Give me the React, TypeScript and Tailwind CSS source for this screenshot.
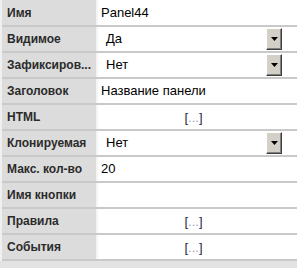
import React from 'react'

type Row = { label: string; value?: string; kind?: 'text' | 'select' | 'dots' }

const rows: Row[] = [
  { label: 'Имя', value: 'Panel44' },
  { label: 'Видимое', value: 'Да', kind: 'select' },
  { label: 'Зафиксиров...', value: 'Нет', kind: 'select' },
  { label: 'Заголовок', value: 'Название панели' },
  { label: 'HTML', kind: 'dots' },
  { label: 'Клонируемая', value: 'Нет', kind: 'select' },
  { label: 'Макс. кол-во', value: '20' },
  { label: 'Имя кнопки', value: '' },
  { label: 'Правила', kind: 'dots' },
  { label: 'События', kind: 'dots' },
]

function DropButton() {
  return (
    <div className="ml-auto mr-[15px] flex h-[22px] w-[16px] items-center justify-center border border-t-white border-l-white border-r-[#404040] border-b-[#404040] bg-[#d4d0c8] shadow-[inset_-1px_-1px_0_#808080]">
      <svg width="7" height="4" viewBox="0 0 7 4">
        <path d="M0 0h7L3.5 4z" fill="#000" />
      </svg>
    </div>
  )
}

function Dots() {
  return (
    <div className="flex w-full justify-center pr-[8px] text-[13px] leading-none">
      <span className="text-[#2a1f40]">[</span>
      <span className="text-[#a0a0b0]">...</span>
      <span className="text-[#2a1f40]">]</span>
    </div>
  )
}

export default function App() {
  return (
    <div className="h-[268px] w-[297px] bg-[#e3e3e3] font-['Liberation_Sans',Arial,sans-serif]">
      <div className="border-l-2 border-[#f0f0f0] bg-white">
        {rows.map((r, i) => (
          <div
            key={i}
            className={`flex border-b-2 border-[#c9c9c9] ${i === 0 ? 'h-[27px]' : 'h-[26px]'}`}
          >
            <div className="flex w-[96px] items-center border-r-2 border-[#f4f4f4] bg-[#dcdcdc] pl-[5px] text-[12px] font-bold text-[#2b2b2b]">
              <span className="whitespace-nowrap">{r.label}</span>
            </div>
            <div className="flex flex-1 items-center bg-white text-[13px] text-black">
              {r.kind === 'select' ? (
                <>
                  <span className="pl-[8px]">{r.value}</span>
                  <DropButton />
                </>
              ) : r.kind === 'dots' ? (
                <Dots />
              ) : (
                <span className="pl-[3px]">{r.value}</span>
              )}
            </div>
          </div>
        ))}
      </div>
    </div>
  )
}
